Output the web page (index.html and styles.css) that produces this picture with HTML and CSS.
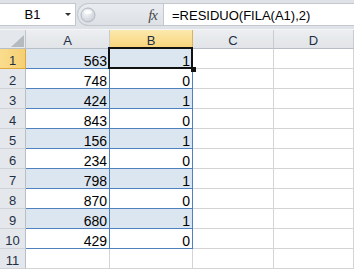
FILE: index.html
```html
<!DOCTYPE html>
<html lang="es">
<head>
    <meta charset="UTF-8">
    <title>RESIDUO</title>
    <link rel="stylesheet" href="styles.css">
</head>
<body>
    <div class="formulaBar">
        <div class="nameBox">
            <span class="name">B1</span>
            <span class="arrow"></span>
        </div>
        <div class="fxArea">
            <svg class="grip" width="16" height="16" viewBox="0 0 16 16">
                <defs>
                    <radialGradient id="gripFill" cx="0.4" cy="0.35" r="0.7">
                        <stop offset="0" stop-color="#f6f7f9"/>
                        <stop offset="1" stop-color="#c9ced5"/>
                    </radialGradient>
                </defs>
                <circle cx="8" cy="8" r="7" fill="url(#gripFill)" stroke="#b3b9c2"/>
                <ellipse cx="8" cy="5" rx="4" ry="2" fill="#fff" opacity="0.8"/>
            </svg>
            <span class="fx">fx</span>
        </div>
        <div class="formula">=RESIDUO(FILA(A1),2)</div>
    </div>

    <div class="sheet">
        <div class="corner"></div>
        <div class="ch">A</div>
        <div class="ch on">B</div>
        <div class="ch">C</div>
        <div class="ch">D</div>

        <div class="rh on">1</div>
        <div class="t band">563</div>
        <div class="t band sel">1</div>
        <div class="c"></div>
        <div class="c"></div>

        <div class="rh">2</div>
        <div class="t">748</div>
        <div class="t">0</div>
        <div class="c"></div>
        <div class="c"></div>

        <div class="rh">3</div>
        <div class="t band">424</div>
        <div class="t band">1</div>
        <div class="c"></div>
        <div class="c"></div>

        <div class="rh">4</div>
        <div class="t">843</div>
        <div class="t">0</div>
        <div class="c"></div>
        <div class="c"></div>

        <div class="rh">5</div>
        <div class="t band">156</div>
        <div class="t band">1</div>
        <div class="c"></div>
        <div class="c"></div>

        <div class="rh">6</div>
        <div class="t">234</div>
        <div class="t">0</div>
        <div class="c"></div>
        <div class="c"></div>

        <div class="rh">7</div>
        <div class="t band">798</div>
        <div class="t band">1</div>
        <div class="c"></div>
        <div class="c"></div>

        <div class="rh">8</div>
        <div class="t">870</div>
        <div class="t">0</div>
        <div class="c"></div>
        <div class="c"></div>

        <div class="rh">9</div>
        <div class="t band">680</div>
        <div class="t band">1</div>
        <div class="c"></div>
        <div class="c"></div>

        <div class="rh">10</div>
        <div class="t">429</div>
        <div class="t">0</div>
        <div class="c"></div>
        <div class="c"></div>

        <div class="rh">11</div>
        <div class="c"></div>
        <div class="c"></div>
        <div class="c"></div>
        <div class="c"></div>
    </div>
</body>
</html>
```

FILE: styles.css
```css
body{
    margin: 0;
    padding: 0;
    width: 354px;
    height: 270px;
    overflow: hidden;
    background-color: #fff;
    font-family: "Liberation Sans", Arial, sans-serif;
}
.formulaBar{
    display: flex;
    height: 30px;
    box-sizing: border-box;
    padding-top: 3px;
    background-color: #dfe3e8;
    border-bottom: 1px solid #f4f5f7;
}
.nameBox{
    display: flex;
    align-items: flex-start;
    width: 76px;
    height: 23px;
    box-sizing: border-box;
    background-color: #fff;
    border: 1px solid #c3c8cf;
    border-left: none;
}
.name{
    flex: 1;
    text-align: center;
    font-size: 13px;
    line-height: 20px;
    padding-top: 1px;
    color: #000;
}
.arrow{
    width: 0;
    height: 0;
    margin: 9px 4px 0 0;
    border-left: 3px solid transparent;
    border-right: 3px solid transparent;
    border-top: 3px solid #333;
}
.fxArea{
    display: flex;
    align-items: center;
    justify-content: space-between;
    width: 86px;
    height: 23px;
    box-sizing: border-box;
    margin-left: 1px;
    padding: 0 6px 0 2px;
    border: 1px solid #c3c8cf;
    border-right: none;
    border-radius: 12px 0 0 12px;
    background: linear-gradient(#e9ecf0, #dde1e6);
}
.grip{
    display: block;
}
.fx{
    font-family: "Liberation Serif", "Times New Roman", serif;
    font-style: italic;
    font-size: 15px;
    color: #4a4a4a;
    letter-spacing: -1px;
    padding-top: 1px;
}
.formula{
    flex: 1;
    height: 23px;
    box-sizing: border-box;
    padding: 2px 0 0 8px;
    background-color: #fff;
    border: 1px solid #c3c8cf;
    border-right: none;
    font-size: 13px;
    line-height: 20px;
    color: #000;
    white-space: nowrap;
}
.sheet{
    display: grid;
    grid-template-columns: 26px 84px 83px 81px 80px;
    grid-template-rows: 19px repeat(11, 20px);
}
.sheet > div{
    box-sizing: border-box;
}
.corner{
    display: flex;
    justify-content: flex-end;
    align-items: flex-end;
    padding: 0 1px 1px 0;
    background-color: #e4e7eb;
    border-right: 1px solid #c0c5cc;
    border-bottom: 1px solid #b8bec6;
}
.corner::after{
    content: '';
    width: 0;
    height: 0;
    border-left: 13px solid transparent;
    border-bottom: 12px solid #b5bac1;
}
.ch{
    text-align: center;
    font-size: 13px;
    line-height: 15px;
    padding-top: 3px;
    color: #1f2f45;
    background: linear-gradient(#eceef1, #e1e4e8);
    border-right: 1px solid #c8ccd2;
    border-bottom: 1px solid #b8bec6;
}
.ch.on{
    background: linear-gradient(#fce9ae, #f8d479);
    border-right-color: #d9b45c;
    border-bottom-color: #e0a83a;
}
.rh{
    text-align: center;
    font-size: 13px;
    line-height: 15px;
    padding-top: 4px;
    color: #1f2f45;
    background-color: #e4e7eb;
    border-right: 1px solid #b8bec6;
    border-bottom: 1px solid #cfd3d8;
}
.rh.on{
    background: linear-gradient(90deg, #f9dd8e, #f6cf72);
    border-bottom-color: #e0a83a;
    border-right-color: #d9a83e;
}
.c{
    border-right: 1px solid #d4d4d4;
    border-bottom: 1px solid #d4d4d4;
}
.t{
    text-align: right;
    font-size: 14px;
    line-height: 16px;
    padding: 4px 2px 0 0;
    color: #000;
    background-color: #fff;
    border-right: 1px solid #4f81bd;
    border-bottom: 1px solid #4f81bd;
}
.t.band{
    background-color: #dce6f1;
}
.sel{
    position: relative;
    z-index: 1;
}
.sel::after{
    content: '';
    position: absolute;
    top: -2px;
    left: -2px;
    right: -1px;
    bottom: -1px;
    border: 2px solid #111;
}
.sel::before{
    content: '';
    position: absolute;
    right: -4px;
    bottom: -4px;
    width: 5px;
    height: 5px;
    background-color: #111;
    z-index: 2;
}
```
